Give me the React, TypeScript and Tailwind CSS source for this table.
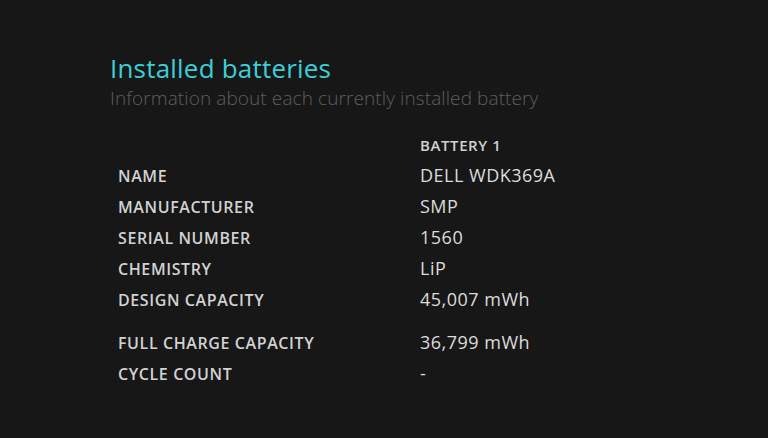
const rows: { label: string; value: string; gap?: boolean }[] = [
  { label: "NAME", value: "DELL WDK369A" },
  { label: "MANUFACTURER", value: "SMP" },
  { label: "SERIAL NUMBER", value: "1560" },
  { label: "CHEMISTRY", value: "LiP" },
  { label: "DESIGN CAPACITY", value: "45,007 mWh" },
  { label: "FULL CHARGE CAPACITY", value: "36,799 mWh", gap: true },
  { label: "CYCLE COUNT", value: "-" },
];

export default function App() {
  return (
    <div
      className="w-[768px] h-[438px] overflow-hidden bg-[#171717] pl-[110px] pt-[53px]"
      style={{ fontFamily: '"Open Sans", "Noto Sans", sans-serif' }}
    >
      <h1 className="h-[30px] leading-[30px] text-[26px] font-medium text-[#3ccfd8] tracking-[0.2px]">
        Installed batteries
      </h1>
      <p className="h-[30px] leading-[30px] text-[19px] font-light text-[#5e5e5e] tracking-[0.1px]">
        Information about each currently installed battery
      </p>

      <div className="mt-[17px] pl-2 text-[#d2d2d2]">
        <div className="flex h-[30px] items-center">
          <div className="w-[302px]" />
          <div className="text-[15px] font-semibold tracking-[0.6px]">BATTERY 1</div>
        </div>
        {rows.map((r) => (
          <div
            key={r.label}
            className={`flex h-[31px] items-center ${r.gap ? "mt-[12px]" : ""}`}
          >
            <div className="w-[302px] text-[16px] font-semibold tracking-[0.6px]">
              {r.label}
            </div>
            <div className="text-[18px] font-normal text-[#dcdcdc] tracking-[0.5px]">
              {r.value}
            </div>
          </div>
        ))}
      </div>
    </div>
  );
}
